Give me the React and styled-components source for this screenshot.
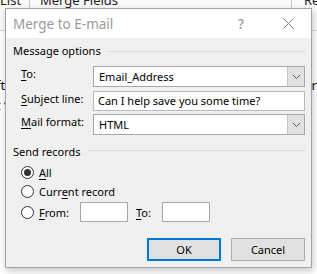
import React from "react";
import styled, { createGlobalStyle } from "styled-components";

const GlobalStyle = createGlobalStyle`
  html, body {
    margin: 0;
    padding: 0;
    background: #ffffff;
    overflow: hidden;
  }
  * {
    box-sizing: border-box;
  }
`;

const FONT = `"Noto Sans", "Liberation Sans", sans-serif`;

export const Page = styled.div`
  position: relative;
  width: 317px;
  height: 274px;
  overflow: hidden;
  background: #ffffff;
  font-family: ${FONT};
  font-size: 11px;
  color: #000;
`;

export const Ribbon = styled.div`
  display: flex;
  height: 31px;
  border-bottom: 1px solid #d6d6d6;
  background: #fafafa;
`;

export const RibbonItem = styled.div`
  width: ${(p) => p.$w}px;
  height: 28px;
  border-right: ${(p) => (p.$sep ? "1px solid #c8c8c8" : "none")};
  padding-left: ${(p) => p.$pad || 0}px;
  font-size: 13px;
  line-height: 6px;
  color: #222;
  overflow: hidden;
  white-space: nowrap;
  margin-top: -3px;
`;

export const Document = styled.div`
  display: flex;
  justify-content: space-between;
  font-size: 13px;
  color: #111;
  white-space: nowrap;
`;

export const DocColumn = styled.div`
  display: flex;
  flex-direction: column;
  padding-top: ${(p) => p.$top}px;
  gap: ${(p) => p.$gap}px;
  margin-left: ${(p) => p.$shift || 0}px;
  line-height: 14px;
`;

export const Dialog = styled.div`
  position: absolute;
  left: 5px;
  top: 8px;
  width: 307px;
  height: 260px;
  border: 1px solid #a3a3a3;
  background: #f0f0f0;
  box-shadow: 1px 3px 7px rgba(0, 0, 0, 0.22);
  display: flex;
  flex-direction: column;
`;

export const TitleBar = styled.div`
  display: flex;
  align-items: center;
  height: 29px;
  background: #ffffff;
  padding-left: 7px;
`;

export const Title = styled.div`
  flex: 1;
  color: #9a9a9a;
  font-size: 13.5px;
`;

export const Help = styled.div`
  width: 12px;
  color: #8a8a8a;
  font-size: 13.5px;
  margin-right: 33px;
`;

export const Close = styled.div`
  display: flex;
  align-items: center;
  margin-right: 17px;
`;

export const Body = styled.div`
  display: flex;
  flex-direction: column;
  padding: 4px 6px 0 6px;
`;

export const GroupHeader = styled.div`
  display: flex;
  align-items: center;
  gap: 7px;
  height: 16px;
  margin-top: ${(p) => p.$mt || 0}px;
  padding-left: 1px;

  &::after {
    content: "";
    flex: 1;
    height: 1px;
    background: #dcdcdc;
    margin-top: ${(p) => p.$lineOffset || 0}px;
  }
`;

export const FieldRow = styled.div`
  display: grid;
  grid-template-columns: 72px 1fr;
  align-items: center;
  margin-top: ${(p) => p.$mt}px;
  padding-left: 9px;
`;

export const Label = styled.div`
  align-self: start;
`;

export const Key = styled.span`
  text-decoration: underline;
  text-underline-offset: 2px;
`;

export const Combo = styled.div`
  display: flex;
  height: 21px;
  border: 1px solid #a8a8a8;
  background: #fff;
`;

export const ComboText = styled.div`
  flex: 1;
  padding: 0 5px;
  line-height: 19px;
`;

export const ComboButton = styled.div`
  width: 17px;
  display: flex;
  align-items: center;
  justify-content: center;
  background: #e1e1e1;
  border-left: 1px solid #c4c4c4;
`;

export const TextBox = styled.div`
  height: 20px;
  width: ${(p) => (p.$w ? `${p.$w}px` : "auto")};
  border: 1px solid ${(p) => p.$border || "#b9b9b9"};
  background: #fff;
  padding: 0 4px;
  line-height: 18px;
  white-space: nowrap;
  overflow: hidden;
`;

export const RadioRow = styled.div`
  display: flex;
  align-items: center;
  height: ${(p) => p.$h || 16}px;
  margin-top: ${(p) => p.$mt}px;
  padding-left: 9px;
`;

export const Radio = styled.span`
  width: 13px;
  height: 13px;
  border-radius: 50%;
  border: 1px solid #333;
  background: #fff;
  display: flex;
  align-items: center;
  justify-content: center;
  margin-right: 5px;
  flex: none;

  &::after {
    content: "";
    display: ${(p) => (p.$checked ? "block" : "none")};
    width: 7px;
    height: 7px;
    border-radius: 50%;
    background: #333;
  }
`;

export const InlineLabel = styled.span`
  width: ${(p) => (p.$w ? `${p.$w}px` : "auto")};
  margin-left: ${(p) => p.$ml || 0}px;
  flex: none;
`;

export const Buttons = styled.div`
  display: flex;
  justify-content: flex-end;
  gap: 10px;
  margin-top: 16px;
`;

export const Button = styled.div`
  width: 74px;
  height: 23px;
  display: flex;
  align-items: center;
  justify-content: center;
  background: #e1e1e1;
  border: ${(p) => (p.$primary ? "2px solid #0078d7" : "1px solid #adadad")};
`;

const Chevron = () => (
  <svg width="9" height="6" viewBox="0 0 9 6">
    <polyline points="1,1 4.5,4.5 8,1" fill="none" stroke="#5a5a5a" strokeWidth="1" />
  </svg>
);

const CloseIcon = () => (
  <svg width="11" height="11" viewBox="0 0 11 11">
    <line x1="0.5" y1="0.5" x2="10.5" y2="10.5" stroke="#7a7a7a" strokeWidth="1" />
    <line x1="10.5" y1="0.5" x2="0.5" y2="10.5" stroke="#7a7a7a" strokeWidth="1" />
  </svg>
);

const App = () => {
  return (
    <Page>
      <GlobalStyle />
      <Ribbon>
        <RibbonItem $w={30} $sep>List</RibbonItem>
        <RibbonItem $w={262} $sep $pad={10}>Merge Fields</RibbonItem>
        <RibbonItem $w={25} $pad={12}>Re</RibbonItem>
      </Ribbon>
      <Document>
        <DocColumn $top={47} $gap={6} $shift={-4}>
          <span>ft</span>
          <span>t ‘</span>
        </DocColumn>
        <DocColumn $top={47} $gap={16}>
          <span>ar</span>
          <span>y</span>
        </DocColumn>
      </Document>

      <Dialog>
        <TitleBar>
          <Title>Merge to E-mail</Title>
          <Help>?</Help>
          <Close><CloseIcon /></Close>
        </TitleBar>
        <Body>
          <GroupHeader $lineOffset={2}>Message options</GroupHeader>

          <FieldRow $mt={8}>
            <Label><Key>T</Key>o:</Label>
            <Combo>
              <ComboText>Email_Address</ComboText>
              <ComboButton><Chevron /></ComboButton>
            </Combo>
          </FieldRow>
          <FieldRow $mt={4}>
            <Label><Key>S</Key>ubject line:</Label>
            <TextBox>Can I help save you some time?</TextBox>
          </FieldRow>
          <FieldRow $mt={3}>
            <Label><Key>M</Key>ail format:</Label>
            <Combo>
              <ComboText>HTML</ComboText>
              <ComboButton><Chevron /></ComboButton>
            </Combo>
          </FieldRow>

          <GroupHeader $mt={8} $lineOffset={-2}>Send records</GroupHeader>

          <RadioRow $mt={5}>
            <Radio $checked />
            <span><Key>A</Key>ll</span>
          </RadioRow>
          <RadioRow $mt={3}>
            <Radio />
            <span>Curr<Key>e</Key>nt record</span>
          </RadioRow>
          <RadioRow $mt={3} $h={20}>
            <Radio />
            <InlineLabel $w={41}><Key>F</Key>rom:</InlineLabel>
            <TextBox $w={48} $border="#a8a8a8" />
            <InlineLabel $w={26} $ml={8}><Key>T</Key>o:</InlineLabel>
            <TextBox $w={48} $border="#a8a8a8" />
          </RadioRow>

          <Buttons>
            <Button $primary>OK</Button>
            <Button>Cancel</Button>
          </Buttons>
        </Body>
      </Dialog>
    </Page>
  );
};

export default App;
